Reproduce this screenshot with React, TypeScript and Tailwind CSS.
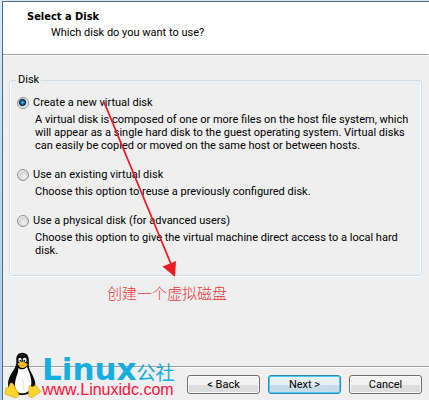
import { useState } from "react";

type DiskOption = { id: string; label: string; description: string };

const options: DiskOption[] = [
  {
    id: "new",
    label: "Create a new virtual disk",
    description:
      "A virtual disk is composed of one or more files on the host file system, which will appear as a single hard disk to the guest operating system. Virtual disks can easily be copied or moved on the same host or between hosts.",
  },
  {
    id: "existing",
    label: "Use an existing virtual disk",
    description: "Choose this option to reuse a previously configured disk.",
  },
  {
    id: "physical",
    label: "Use a physical disk (for advanced users)",
    description:
      "Choose this option to give the virtual machine direct access to a local hard disk.",
  },
];

function DiskRadio({
  option,
  checked,
  onSelect,
}: {
  option: DiskOption;
  checked: boolean;
  onSelect: () => void;
}) {
  return (
    <div>
      <div className="flex h-4 items-center gap-1">
        <input
          type="radio"
          name="disk"
          id={option.id}
          checked={checked}
          onChange={onSelect}
          aria-describedby={option.id + "-description"}
          className="size-3 shrink-0 appearance-none rounded-full border border-[#8e8f8f] bg-[radial-gradient(circle_at_60%_65%,#f4f4f4_0%,#d2d4d6_55%,#f6f6f6_75%)] checked:bg-[radial-gradient(circle_at_45%_45%,#7fd0f0_0%,#1f6a9c_20%,#12344f_42%,#e4eaee_54%,#fafafa_75%)]"
        />
        <label htmlFor={option.id}>{option.label}</label>
      </div>
      <p id={option.id + "-description"} className="mt-0.5 pl-[18px] leading-[13px]">
        {option.description}
      </p>
    </div>
  );
}

function Tux() {
  return (
    <svg viewBox="0 0 112 138" className="h-[46px] w-[38px] shrink-0" aria-hidden="true">
      <path
        d="M53 2C41 2 35 12 36 25C37 38 33 47 26 57C17 70 10 84 11 100C12 119 30 130 53 129C80 128 94 116 93 96C92 76 77 60 74 46C72 34 76 23 71 12C68 5 61 2 53 2Z"
        fill="#080808"
      />
      <path
        d="M42 48C48 54 61 53 68 44C71 54 80 69 81 88C82 109 74 123 56 124C39 125 31 113 32 96C33 76 42 66 42 48Z"
        fill="#fff"
      />
      <path d="M55 78C58 94 56 106 60 117" fill="none" stroke="#e2e2e2" strokeWidth="3" />
      <ellipse cx="47" cy="24" rx="5" ry="7" fill="#fff" />
      <ellipse cx="61" cy="24" rx="6" ry="7" fill="#fff" />
      <circle cx="48" cy="26" r="2.5" fill="#111" />
      <circle cx="60" cy="26" r="3" fill="#111" />
      <path d="M40 36C45 31 51 28 57 30L70 36C68 45 55 51 47 46Z" fill="#ffc61c" />
      <path d="M43 38L55 41L68 36" fill="none" stroke="#d79509" strokeWidth="2" />
      <path
        d="M18 94C25 91 29 98 33 108C37 117 45 123 43 130C40 139 29 137 18 132L4 127C-1 124 5 119 4 112C3 107 8 108 12 107Z"
        fill="#ffd42c"
        stroke="#d89d13"
        strokeWidth="2"
      />
      <path
        d="M77 99C80 106 88 106 94 98C99 99 97 107 104 112C111 117 109 121 102 124C93 129 87 138 79 136C69 134 74 119 74 107Z"
        fill="#ffd42c"
        stroke="#d89d13"
        strokeWidth="2"
      />
    </svg>
  );
}

const buttonBase =
  "flex h-[19px] w-[73px] items-center justify-center rounded-[3px] border leading-[13px]";
const buttonPlain =
  "border-[#707070] bg-linear-to-b from-[#f2f2f2] from-50% to-[#dddddd] to-50% shadow-[inset_0_0_0_1px_#fafafa]";
const buttonDefault =
  "border-[#3c7fb1] bg-linear-to-b from-[#e5f1f7] from-50% to-[#c6dde9] to-50% shadow-[inset_0_0_0_1px_#45d0fa]";

export default function App() {
  const [selected, setSelected] = useState("new");

  return (
    <div className="min-h-screen bg-linear-to-b from-[#d9ebfa] via-[#b8d7f0] to-[#a9cdec] pt-px pl-0.5 font-['Roboto',sans-serif] text-[11px] text-black">
      <div className="relative flex min-h-[399px] flex-col border-t border-l border-[#53687d] bg-[#efefef]">
        <header className="h-[52px] bg-white pt-[7px] pl-6 leading-4">
          <h1 className="font-['DejaVu_Sans_Condensed','DejaVu_Sans',sans-serif] font-bold">
            Select a Disk
          </h1>
          <p className="pl-6">Which disk do you want to use?</p>
        </header>
        <div className="mr-px h-0.5 border-t border-[#9f9f9f] bg-white" />

        <main className="grow pr-[7px] pl-1.5">
          <fieldset className="mt-4 rounded-[3px] border border-[#d0dce6] px-1.5 pb-[18px] shadow-[inset_1px_0_0_#fff,inset_-1px_0_0_#fff,0_1px_0_#fff]">
            <legend className="px-0.5 leading-4">Disk</legend>
            <div className="flex flex-col gap-[15px] pt-[7px] pl-px">
              {options.map((option) => (
                <DiskRadio
                  key={option.id}
                  option={option}
                  checked={selected === option.id}
                  onSelect={() => setSelected(option.id)}
                />
              ))}
            </div>
          </fieldset>
          <p className="mt-[7px] pl-[98px] font-['Noto_Sans_CJK_SC',sans-serif] text-[15px] leading-5 font-light text-[#ed3434]">
            创建一个虚拟磁盘
          </p>
        </main>

        <footer className="h-[34px] border-t border-[#9f9f9f]">
          <div className="flex justify-end gap-2 border-t border-white pt-[7px] pr-[7px]">
            <button type="button" className={buttonBase + " " + buttonPlain}>
              &lt; Back
            </button>
            <button type="button" className={buttonBase + " " + buttonDefault}>
              Next &gt;
            </button>
            <button type="button" className={buttonBase + " " + buttonPlain}>
              Cancel
            </button>
          </div>
        </footer>

        <svg
          className="pointer-events-none absolute top-[98px] left-[98px] h-[180px] w-20"
          viewBox="0 0 80 180"
          aria-hidden="true"
        >
          <path d="M3 2L70 164" stroke="#ed1c24" strokeWidth="1.8" />
          <path d="M61.5 166.5L75 161L74 177Z" fill="#ed1c24" />
        </svg>

        <div className="absolute bottom-0.5 left-px flex items-end">
          <Tux />
          <div className="flex flex-col">
            <div className="flex h-[26px] items-end text-[#16aede]">
              <span className="font-['DejaVu_Sans',sans-serif] text-[31px] leading-[26px] font-bold">
                Linux
              </span>
              <span className="font-['Noto_Sans_CJK_SC',sans-serif] text-[19px] leading-5">
                公社
              </span>
            </div>
            <span className="font-['Liberation_Sans',sans-serif] text-base leading-4 text-[#ff0f3c]">
              www.Linuxidc.com
            </span>
          </div>
        </div>
      </div>
    </div>
  );
}
